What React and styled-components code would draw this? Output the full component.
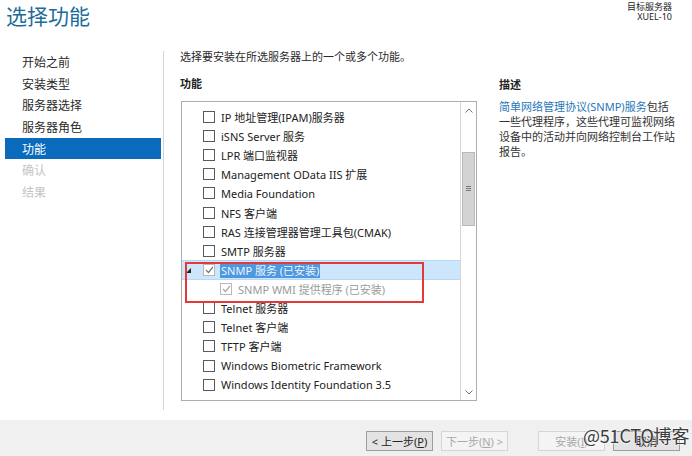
import React from 'react';
import styled, { createGlobalStyle } from 'styled-components';

const GlobalStyle = createGlobalStyle`
  html, body {
    margin: 0;
    padding: 0;
    background: #ffffff;
  }
  body {
    font-family: "Segoe UI", "Noto Sans", "Noto Sans CJK SC", sans-serif;
    color: #1e1e1e;
  }
`;

const Wizard = styled.div`
  position: relative;
  width: 692px;
  height: 456px;
  display: flex;
  flex-direction: column;
  background: #ffffff;
  overflow: hidden;
`;

const Header = styled.div`
  height: 50px;
  display: flex;
  justify-content: space-between;
  align-items: flex-start;
  padding: 0 20px 0 6px;
  box-sizing: border-box;
`;

const Title = styled.h1`
  margin: 0;
  font-size: 21px;
  font-weight: 400;
  line-height: 30px;
  color: #1b6c9a;
  font-family: "Noto Sans CJK SC", sans-serif;
`;

const ServerInfo = styled.div`
  padding-top: 2px;
  text-align: right;
  font-size: 9px;
  line-height: 10px;
  color: #222;
`;

const Body = styled.div`
  flex: 1;
  display: flex;
`;

const Nav = styled.ul`
  list-style: none;
  margin: 1px 0 10px 0;
  padding: 0 2px 0 5px;
  width: 156px;
  border-right: 1px solid #d4d4d4;
`;

const NavItem = styled.li`
  height: 21.67px;
  line-height: 21.67px;
  padding-left: 17px;
  font-size: 12px;
  font-family: "Noto Sans CJK SC", sans-serif;
  background: ${p => (p.active ? '#0a6bbd' : 'transparent')};
  color: ${p => (p.active ? '#ffffff' : p.disabled ? '#c4c4c4' : '#2a2a2a')};
`;

const Main = styled.div`
  width: 297px;
  padding-left: 16px;
  display: flex;
  flex-direction: column;
`;

const Intro = styled.div`
  font-size: 11px;
  line-height: 14px;
  color: #2a2a2a;
`;

const SectionLabel = styled.div`
  margin-top: ${p => p.top}px;
  font-size: 11px;
  line-height: 14px;
  font-weight: 700;
  color: #222;
`;

const ListBox = styled.div`
  position: relative;
  margin-top: 10px;
  margin-left: 1px;
  width: 296px;
  height: 300px;
  box-sizing: border-box;
  border: 1px solid #acacac;
  display: flex;
`;

const Rows = styled.div`
  flex: 1;
  padding-top: 5.4px;
`;

const Row = styled.div`
  height: 19.14px;
  display: flex;
  align-items: center;
  box-sizing: border-box;
  padding-left: ${p => (p.child ? 38 : 21)}px;
  font-size: 11px;
  background: ${p => (p.selected ? '#cde6fb' : 'transparent')};
  border-top: 1px solid ${p => (p.selected ? '#b5d8f6' : 'transparent')};
  border-bottom: 1px solid ${p => (p.selected ? '#b5d8f6' : 'transparent')};
  position: relative;
`;

const Expander = styled.svg`
  position: absolute;
  left: 4px;
  top: 7px;
  width: 5px;
  height: 5px;
`;

const Box = styled.span`
  width: 12px;
  height: 12px;
  box-sizing: border-box;
  border: 1px solid ${p => (p.muted ? '#b8b8b8' : '#5a5a5a')};
  background: #ffffff;
  display: flex;
  align-items: center;
  justify-content: center;
  margin-right: 6px;
  flex-shrink: 0;
`;

const Label = styled.span`
  white-space: nowrap;
  color: ${p => (p.muted ? '#9a9a9a' : '#222222')};
  ${p => p.highlight && `
    background: #4d98de;
    color: #eef5fd;
    padding: 0 1px;
    margin-left: -1px;
  `}
`;

const Scrollbar = styled.div`
  width: 15px;
  border-left: 1px solid #d6d6d6;
  display: flex;
  flex-direction: column;
  align-items: center;
`;

const ArrowButton = styled.div`
  height: 16px;
  width: 100%;
  display: flex;
  align-items: center;
  justify-content: center;
`;

const Track = styled.div`
  flex: 1;
  width: 100%;
`;

const Thumb = styled.div`
  margin-top: 34px;
  height: 74px;
  width: 13px;
  margin-left: 1px;
  box-sizing: border-box;
  background: #d3d3d3;
  border: 1px solid #b9b9b9;
  display: flex;
  align-items: center;
  justify-content: center;
`;

const Annotation = styled.div`
  position: absolute;
  left: 3px;
  top: 160px;
  width: 239px;
  height: 41px;
  box-sizing: border-box;
  border: 2px solid #e23a3a;
  pointer-events: none;
`;

const Description = styled.div`
  margin-left: 22px;
  width: 180px;
  padding-top: 28px;
`;

const DescText = styled.p`
  margin: 7px 0 0 0;
  font-size: 11px;
  line-height: 15px;
  color: #333333;
`;

const Link = styled.span`
  color: #1f76b8;
`;

const Footer = styled.div`
  height: 36px;
  background: #f0f0f0;
  display: flex;
  justify-content: flex-end;
  align-items: flex-start;
  padding: 11px 12px 0 0;
  box-sizing: border-box;
`;

const Button = styled.div`
  width: 67px;
  height: 20px;
  box-sizing: border-box;
  margin-left: ${p => p.gap}px;
  border: 1px solid ${p => (p.disabled ? '#d5d5d5' : '#9c9c9c')};
  background: ${p => (p.disabled ? '#f4f4f4' : '#e3e3e3')};
  color: ${p => (p.disabled ? '#a8a8a8' : '#222222')};
  font-size: 11px;
  display: flex;
  align-items: center;
  justify-content: center;
  white-space: nowrap;
  u {
    text-decoration: underline;
  }
`;

const Watermark = styled.div`
  position: absolute;
  left: 583px;
  top: 422px;
  font-size: 18px;
  color: #3b3b3b;
  font-family: "Noto Sans CJK SC", sans-serif;
  text-shadow: 0 0 2px #ffffff, 0 0 2px #ffffff;
  letter-spacing: -0.2px;
`;

const navItems = [
  { label: '开始之前' },
  { label: '安装类型' },
  { label: '服务器选择' },
  { label: '服务器角色' },
  { label: '功能', active: true },
  { label: '确认', disabled: true },
  { label: '结果', disabled: true },
];

const features = [
  { label: 'IP 地址管理(IPAM)服务器' },
  { label: 'iSNS Server 服务' },
  { label: 'LPR 端口监视器' },
  { label: 'Management OData IIS 扩展' },
  { label: 'Media Foundation' },
  { label: 'NFS 客户端' },
  { label: 'RAS 连接管理器管理工具包(CMAK)' },
  { label: 'SMTP 服务器' },
  { label: 'SNMP 服务 (已安装)', checked: true, selected: true, expander: true },
  { label: 'SNMP WMI 提供程序 (已安装)', checked: true, child: true, muted: true },
  { label: 'Telnet 服务器' },
  { label: 'Telnet 客户端' },
  { label: 'TFTP 客户端' },
  { label: 'Windows Biometric Framework' },
  { label: 'Windows Identity Foundation 3.5' },
];

const Check = ({ color }) => (
  <svg width="9" height="8" viewBox="0 0 9 8">
    <polyline points="1 4 3.5 6.5 8 1" fill="none" stroke={color} strokeWidth="1.2" />
  </svg>
);

const Chevron = ({ up }) => (
  <svg width="8" height="5" viewBox="0 0 8 5">
    <polyline
      points={up ? '0.5 4.5 4 1 7.5 4.5' : '0.5 0.5 4 4 7.5 0.5'}
      fill="none"
      stroke="#707070"
      strokeWidth="1"
    />
  </svg>
);

export default function App() {
  return (
    <Wizard>
      <GlobalStyle />
      <Header>
        <Title>选择功能</Title>
        <ServerInfo>
          <div>目标服务器</div>
          <div>XUEL-10</div>
        </ServerInfo>
      </Header>
      <Body>
        <Nav>
          {navItems.map(item => (
            <NavItem key={item.label} active={item.active} disabled={item.disabled}>
              {item.label}
            </NavItem>
          ))}
        </Nav>
        <Main>
          <Intro>选择要安装在所选服务器上的一个或多个功能。</Intro>
          <SectionLabel top={13}>功能</SectionLabel>
          <ListBox>
            <Rows>
              {features.map(f => (
                <Row key={f.label} child={f.child} selected={f.selected}>
                  {f.expander && (
                    <Expander viewBox="0 0 5 5">
                      <polygon points="5,0 5,5 0,5" fill="#222" />
                    </Expander>
                  )}
                  <Box muted={f.checked}>
                    {f.checked && <Check color={f.muted ? '#a8a8a8' : '#7a7a7a'} />}
                  </Box>
                  <Label muted={f.muted} highlight={f.selected}>
                    {f.label}
                  </Label>
                </Row>
              ))}
            </Rows>
            <Scrollbar>
              <ArrowButton>
                <Chevron up />
              </ArrowButton>
              <Track>
                <Thumb>
                  <svg width="5" height="6" viewBox="0 0 5 6">
                    <path d="M0 0.5H5M0 2.5H5M0 4.5H5" stroke="#777" strokeWidth="1" />
                  </svg>
                </Thumb>
              </Track>
              <ArrowButton>
                <Chevron />
              </ArrowButton>
            </Scrollbar>
            <Annotation />
          </ListBox>
        </Main>
        <Description>
          <SectionLabel top={0}>描述</SectionLabel>
          <DescText>
            <Link>简单网络管理协议(SNMP)服务</Link>包括一些代理程序，这些代理可监视网络设备中的活动并向网络控制台工作站报告。
          </DescText>
        </Description>
      </Body>
      <Footer>
        <Button gap={0}>&lt; 上一步(<u>P</u>)</Button>
        <Button gap={8} disabled>
          下一步(<u>N</u>) &gt;
        </Button>
        <Button gap={30} disabled>
          安装(<u>I</u>)
        </Button>
        <Button gap={8}>取消</Button>
      </Footer>
      <Watermark>@51CTO博客</Watermark>
    </Wizard>
  );
}
